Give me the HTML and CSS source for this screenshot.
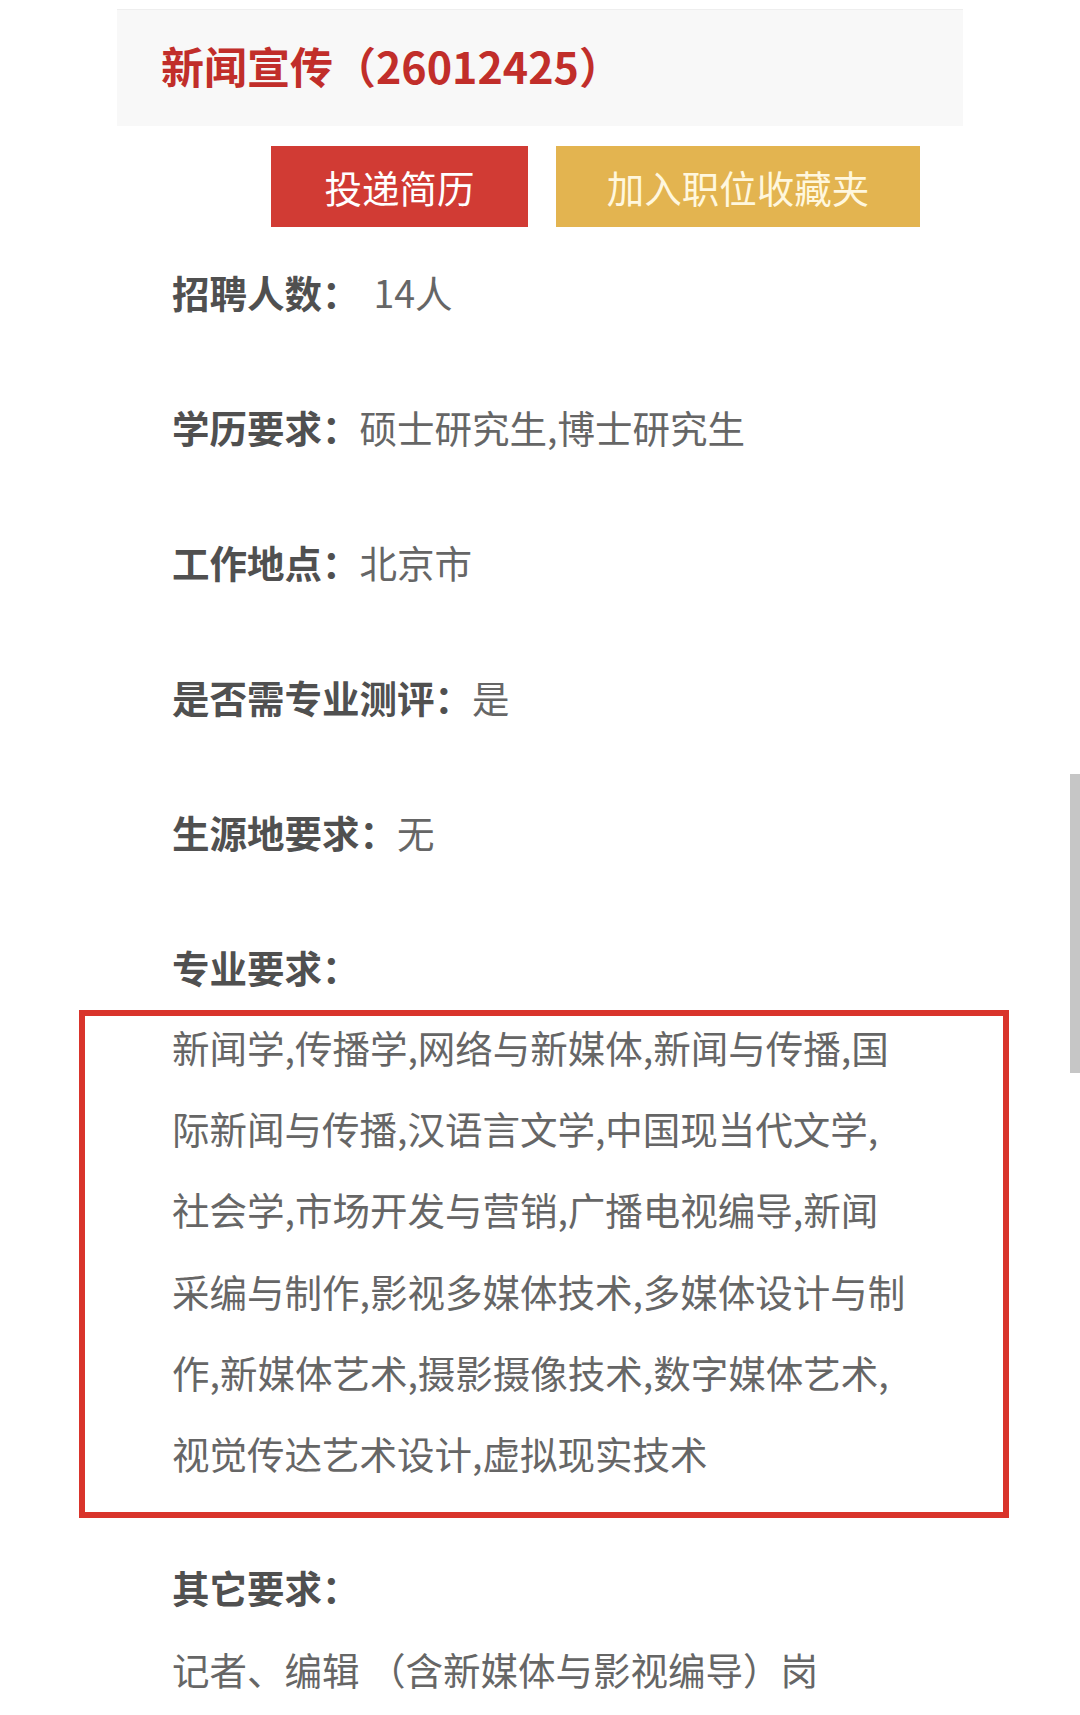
FILE: index.html
```html
<!DOCTYPE html>
<html lang="zh-CN">
<head>
<meta charset="utf-8">
<title>新闻宣传（26012425）</title>
<link rel="stylesheet" href="styles.css">
</head>
<body>
<main class="page">
  <header class="job-head">
    <h1 class="job-title">新闻宣传（26012425）</h1>
  </header>
  <div class="actions">
    <button class="btn btn-apply" type="button">投递简历</button>
    <button class="btn btn-fav" type="button">加入职位收藏夹</button>
  </div>
  <section class="details details-top">
    <p class="row"><span class="label">招聘人数：</span><span class="value value-spaced">14人</span></p>
    <p class="row"><span class="label">学历要求：</span><span class="value">硕士研究生,博士研究生</span></p>
    <p class="row"><span class="label">工作地点：</span><span class="value">北京市</span></p>
    <p class="row"><span class="label">是否需专业测评：</span><span class="value">是</span></p>
    <p class="row"><span class="label">生源地要求：</span><span class="value">无</span></p>
    <p class="row row-head"><span class="label">专业要求：</span></p>
  </section>
  <div class="major-box">
    <p class="major-text">新闻学,传播学,网络与新媒体,新闻与传播,国际新闻与传播,汉语言文学,中国现当代文学,社会学,市场开发与营销,广播电视编导,新闻采编与制作,影视多媒体技术,多媒体设计与制作,新媒体艺术,摄影摄像技术,数字媒体艺术,视觉传达艺术设计,虚拟现实技术</p>
  </div>
  <section class="details details-bottom">
    <p class="row row-head"><span class="label">其它要求：</span></p>
    <p class="row"><span class="value">记者、编辑 （含新媒体与影视编导）岗</span></p>
  </section>
  <div class="scrollbar"></div>
</main>
</body>
</html>
```

FILE: styles.css
```css
html, body {
  margin: 0;
  padding: 0;
}

body {
  width: 1080px;
  height: 1715px;
  overflow: hidden;
  background: #ffffff;
  font-family: "Noto Sans CJK SC", "Noto Sans", sans-serif;
}

.page {
  position: relative;
  width: 1080px;
  height: 1715px;
  padding-top: 9px;
  box-sizing: border-box;
}

.job-head {
  margin: 0 117px;
  height: 117px;
  box-sizing: border-box;
  background: #f8f8f8;
  border-top: 1px solid #eeeeee;
  display: flex;
  align-items: center;
  padding: 0 0 6px 44px;
}

.job-title {
  margin: 0;
  font-size: 43px;
  font-weight: 700;
  line-height: 1;
  color: #c12e2a;
}

.actions {
  display: flex;
  gap: 28px;
  margin: 20px 0 0 271px;
}

.btn {
  border: 0;
  padding: 0;
  height: 81px;
  font-family: inherit;
  font-size: 37.5px;
  font-weight: 400;
  display: flex;
  align-items: center;
  justify-content: center;
}

.btn-apply {
  width: 257px;
  background: #d13b34;
  color: #ffffff;
}

.btn-fav {
  width: 364px;
  background: #e3b450;
  color: #fff7de;
}

.details {
  padding-left: 172px;
}

.details-top {
  margin-top: 24px;
}

.row {
  margin: 0 0 54px;
  font-size: 37.5px;
  line-height: 81px;
  white-space: nowrap;
}

.row-head {
  margin-bottom: 0;
}

.label {
  font-weight: 700;
  color: #505050;
}

.value {
  color: #666666;
}

.value-spaced {
  margin-left: 14px;
}

.major-box {
  margin: 3px 71px 0 79px;
  border: 6px solid #d9342b;
  padding: 0 0 19px 87px;
}

.major-text {
  margin: -10px 0 0;
  max-width: 734px;
  font-size: 37.5px;
  line-height: 81.2px;
  color: #666666;
}

.details-bottom {
  margin-top: 28px;
}

.details-bottom .row-head {
  margin-bottom: 1px;
}

.scrollbar {
  position: absolute;
  right: 0;
  top: 774px;
  width: 10px;
  height: 299px;
  background: #c6c6c6;
}
```
